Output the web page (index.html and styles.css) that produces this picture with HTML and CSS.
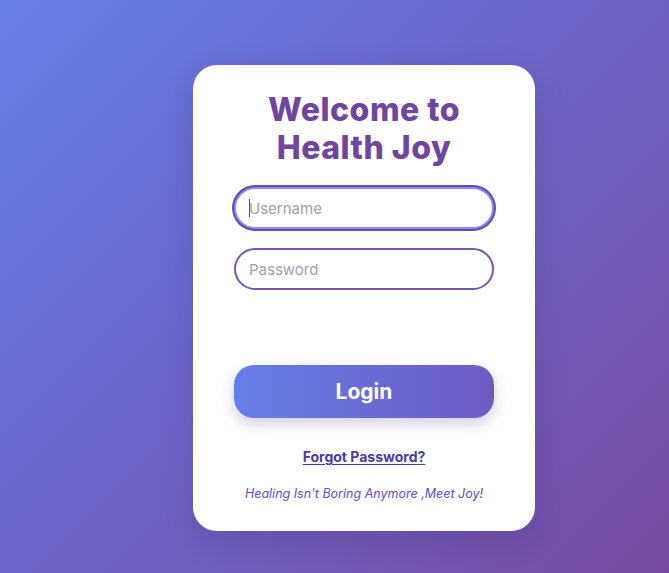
FILE: index.html
```html
<!DOCTYPE html>
<html lang="en">
<head>
<meta charset="utf-8">
<title>Health Joy</title>
<link rel="stylesheet" href="styles.css">
</head>
<body>
<main class="page">
  <div class="card">
    <h1 class="title">Welcome to<br>Health Joy</h1>
    <form class="form">
      <div class="field field-focus">
        <input class="input" type="text" placeholder="Username">
        <span class="caret"></span>
      </div>
      <div class="field">
        <input class="input" type="password" placeholder="Password">
      </div>
      <button type="button" class="btn">Login</button>
    </form>
    <a class="forgot" href="#">Forgot Password?</a>
    <p class="tagline">Healing Isn't Boring Anymore ,Meet Joy!</p>
  </div>
</main>
</body>
</html>
```
FILE: styles.css
```css
* { box-sizing: border-box; }
html, body { margin: 0; padding: 0; }
body {
  min-height: 100vh;
  background: linear-gradient(135deg, #667eea 0%, #764ba2 100%);
  font-family: Inter, "Noto Sans", sans-serif;
}
.page {
  display: flex;
  justify-content: center;
  padding: 65px 0 0 59px;
  min-height: 573px;
}
.card {
  width: 342px;
  height: 466px;
  background: #fff;
  border-radius: 24px;
  padding: 26px 41px 0;
  box-shadow: 0 10px 30px rgba(40, 20, 90, 0.18);
  display: flex;
  flex-direction: column;
  align-items: center;
}
.title {
  margin: 0;
  font-size: 32px;
  line-height: 38px;
  font-weight: 800;
  color: #6f45a0;
  text-align: center;
  letter-spacing: 0.5px;
}
.form {
  width: 100%;
  display: flex;
  flex-direction: column;
  margin-top: 20px;
}
.field {
  position: relative;
  width: 100%;
}
.field + .field { margin-top: 19px; }
.input {
  display: block;
  width: 100%;
  height: 42px;
  border: 2px solid #7a55ad;
  border-radius: 21px;
  padding: 0 13px;
  font-family: inherit;
  font-size: 15px;
  color: #333;
  background: #fff;
  outline: none;
}
.input::placeholder { color: #a2a2a6; }
.field-focus .input {
  border-color: #7f8fef;
  box-shadow: 0 0 0 2px #6f45a8;
}
.caret {
  position: absolute;
  left: 15px;
  top: 12px;
  width: 1px;
  height: 18px;
  background: #555;
}
.btn {
  margin-top: 75px;
  width: 100%;
  height: 53px;
  border: none;
  border-radius: 20px;
  background: linear-gradient(90deg, #667eea 0%, #6e5bc2 100%);
  color: #fff;
  font-family: inherit;
  font-size: 21px;
  font-weight: 700;
  box-shadow: 0 6px 14px rgba(60, 40, 120, 0.22);
}
.forgot {
  margin-top: 30px;
  font-size: 14px;
  font-weight: 700;
  color: #4a3aa8;
  text-decoration: underline;
  text-underline-offset: 2px;
}
.tagline {
  margin: 21px 0 0;
  font-size: 12.5px;
  font-style: italic;
  color: #5b4fcf;
}
```
